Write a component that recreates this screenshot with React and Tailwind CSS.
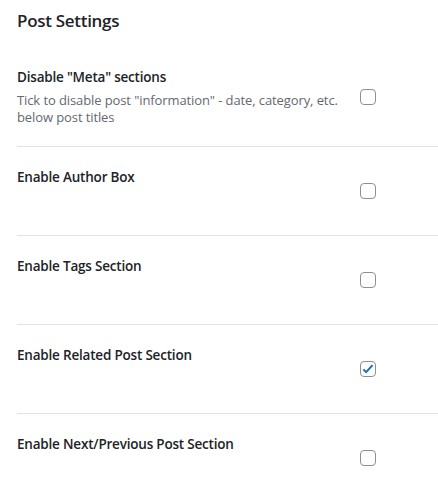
import React, { useState } from 'react';

const settings = [
  {
    id: 'meta',
    label: 'Disable "Meta" sections',
    description: 'Tick to disable post "information" - date, category, etc. below post titles',
    checked: false,
  },
  { id: 'author', label: 'Enable Author Box', checked: false },
  { id: 'tags', label: 'Enable Tags Section', checked: false },
  { id: 'related', label: 'Enable Related Post Section', checked: true },
  { id: 'nextprev', label: 'Enable Next/Previous Post Section', checked: false },
];

const Checkbox = ({ checked, onChange }) => (
  <button
    type="button"
    role="checkbox"
    aria-checked={checked}
    onClick={onChange}
    className="w-4 h-4 shrink-0 rounded-[4px] border border-[#8c8f94] bg-white flex items-center justify-center"
  >
    {checked && (
      <svg viewBox="0 0 20 20" className="w-[14px] h-[14px]">
        <path d="M3.5 10.5l3.8 4L16.5 4.5" fill="none" stroke="#2271b1" strokeWidth="3" strokeLinejoin="round" />
      </svg>
    )}
  </button>
);

const App = () => {
  const [values, setValues] = useState(
    settings.reduce((acc, s) => ({ ...acc, [s.id]: s.checked }), {})
  );

  const toggle = (id) => setValues((prev) => ({ ...prev, [id]: !prev[id] }));

  return (
    <div className="w-[438px] h-[490px] overflow-hidden bg-white pl-[17px] pt-[9px] font-['Open_Sans',sans-serif] text-[#1d2327]">
      <h2 className="text-[17px] leading-6 font-semibold tracking-[-0.3px] mb-[14px]">Post Settings</h2>
      <div>
        {settings.map((item, index) => (
          <div
            key={item.id}
            className={`flex items-center py-5 ${index > 0 ? 'border-t border-[#e2e3e5]' : ''}`}
          >
            <div className={`w-[343px] ${item.description ? '' : 'min-h-[48px]'}`}>
              <div className="text-[13.5px] leading-5 font-semibold tracking-[-0.2px]">{item.label}</div>
              {item.description && (
                <p className="mt-[5px] text-[13px] leading-[17px] text-[#646970] tracking-[-0.1px]">
                  {item.description}
                </p>
              )}
            </div>
            <Checkbox checked={values[item.id]} onChange={() => toggle(item.id)} />
          </div>
        ))}
      </div>
    </div>
  );
};

export default App;
